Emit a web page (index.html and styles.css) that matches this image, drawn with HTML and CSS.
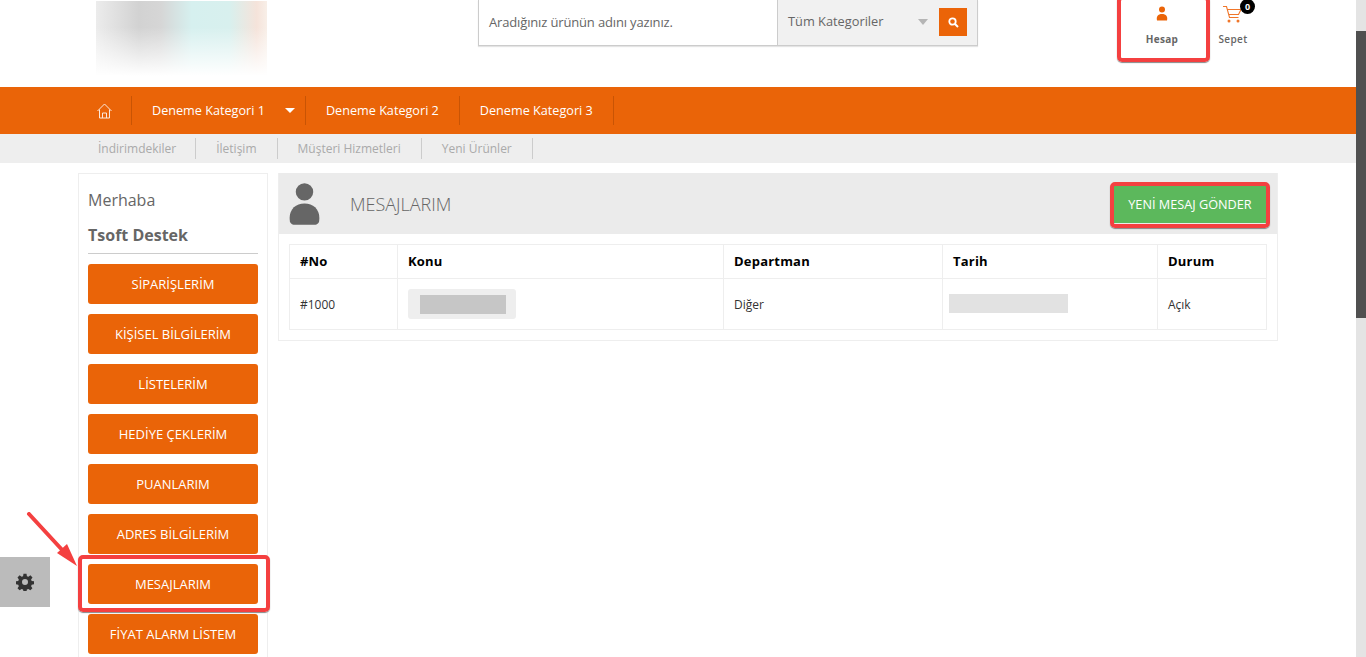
FILE: index.html
```html
<!DOCTYPE html>
<html lang="tr">
<head>
    <meta charset="UTF-8">
    <title>Mesajlarım</title>
    <link rel="stylesheet" href="styles.css">
</head>
<body>
    <header class="top">
        <div class="logo"></div>
        <div class="search">
            <div class="search-input">Aradığınız ürünün adını yazınız.</div>
            <div class="search-cat">
                <span class="cat-label">Tüm Kategoriler</span>
                <span class="cat-arrow"></span>
                <span class="search-btn">
                    <svg width="11" height="11" viewBox="0 0 11 11"><circle cx="4.5" cy="4.5" r="3.2" fill="none" stroke="#fff" stroke-width="1.8"/><path d="M7 7l3 3" stroke="#fff" stroke-width="2"/></svg>
                </span>
            </div>
        </div>
        <div class="account">
            <svg width="12" height="15" viewBox="0 0 12 15"><circle cx="6" cy="3.5" r="3" fill="#eb6408"/><path d="M1 14.5c-1-4 1-6.500 5-6.500s6 2.500 5 6.500z" fill="#eb6408"/></svg>
            <span>Hesap</span>
        </div>
        <div class="cart">
            <svg width="20" height="17" viewBox="0 0 20 17"><path d="M0 .5h3.500l3 11h9M4.500 3.500H18l-2.500 5H6" fill="none" stroke="#f0762a" stroke-width="1.100"/><circle cx="6" cy="15" r="1.500" fill="#f0762a"/><circle cx="15" cy="15" r="1.500" fill="#f0762a"/></svg>
            <span class="cart-badge">0</span>
            <span class="cart-label">Sepet</span>
        </div>
    </header>

    <nav class="mainnav">
        <a class="nav-home">
            <svg width="15" height="16" viewBox="0 0 15 16" fill="none" stroke="#fff" stroke-width="1" opacity="0.85"><path d="M.5 8l7-7 7 7M2.500 6.500V15h10V6.500M5.500 15v-5h4v5"/></svg>
        </a>
        <a class="nav-item nav-drop">Deneme Kategori 1<span class="nav-caret"></span></a>
        <a class="nav-item">Deneme Kategori 2</a>
        <a class="nav-item">Deneme Kategori 3</a>
    </nav>

    <nav class="subnav">
        <a>İndirimdekiler</a>
        <a>İletişim</a>
        <a>Müşteri Hizmetleri</a>
        <a>Yeni Ürünler</a>
    </nav>

    <main class="page">
        <aside class="side">
            <div class="hello">Merhaba</div>
            <div class="username">Tsoft Destek</div>
            <a class="side-btn">SİPARİŞLERİM</a>
            <a class="side-btn">KİŞİSEL BİLGİLERİM</a>
            <a class="side-btn">LİSTELERİM</a>
            <a class="side-btn">HEDİYE ÇEKLERİM</a>
            <a class="side-btn">PUANLARIM</a>
            <a class="side-btn">ADRES BİLGİLERİM</a>
            <a class="side-btn">MESAJLARIM</a>
            <a class="side-btn">FİYAT ALARM LİSTEM</a>
        </aside>

        <section class="panel">
            <div class="panel-head">
                <svg class="panel-icon" width="31" height="42" viewBox="0 0 32 43"><circle cx="16" cy="9" r="9" fill="#666"/><path d="M1 40c-2-12 5-19 15-19s17 7 15 19c-1 2-3 3-5 3H6c-2 0-4-1-5-3z" fill="#666"/></svg>
                <h2>MESAJLARIM</h2>
                <a class="new-msg">YENİ MESAJ GÖNDER</a>
            </div>
            <table class="msg-table">
                <thead>
                    <tr>
                        <th class="col-no">#No</th>
                        <th class="col-subject">Konu</th>
                        <th class="col-dept">Departman</th>
                        <th class="col-date">Tarih</th>
                        <th>Durum</th>
                    </tr>
                </thead>
                <tbody>
                    <tr>
                        <td>#1000</td>
                        <td><span class="blur-subject"><span></span></span></td>
                        <td>Diğer</td>
                        <td><span class="blur-date"></span></td>
                        <td>Açık</td>
                    </tr>
                </tbody>
            </table>
        </section>
    </main>

    <!-- floating stuff and the red annotations drawn on the screenshot -->
    <div class="settings">
        <svg width="18" height="18" viewBox="0 0 24 24"><path fill="#333" fill-rule="evenodd" d="M10 1h4l.6 3.200 1.900.8 2.700-1.900 2.800 2.800-1.900 2.700.8 1.900 3.100.5v4l-3.100.6-.8 1.900 1.800 2.700-2.800 2.800-2.700-1.800-1.900.8-.5 3H10l-.6-3-1.900-.8-2.700 1.800-2.800-2.800 1.800-2.700-.8-1.900-3-.6v-4l3-.5.8-1.900-1.800-2.700 2.800-2.800 2.700 1.900 1.900-.8zM12 8a4 4 0 1 0 0 8 4 4 0 0 0 0-8z"/></svg>
    </div>
    <div class="mark mark-account"></div>
    <div class="mark mark-newmsg"></div>
    <div class="mark mark-side"></div>
    <svg class="mark-arrow" width="56" height="60" viewBox="0 0 56 60"><path d="M3 2l36 39" stroke="#f44040" stroke-width="4" stroke-linecap="round"/><path d="M51 54L31 41l10-9z" fill="#f44040"/></svg>
    <div class="scroll"><div class="scroll-thumb"></div></div>
</body>
</html>
```
FILE: styles.css
```css
html, body {
    margin: 0;
    height: 657px;
    overflow: hidden;
}
body {
    font-family: "Open Sans", Arial, sans-serif;
    font-size: 12px;
    color: #333;
    background-color: #fff;
}
a {
    text-decoration: none;
}

/* top header */
.top {
    display: flex;
    height: 87px;
    padding-left: 96px;
}
.logo {
    width: 171px;
    height: 75px;
    margin-top: 1px;
    background:
        linear-gradient(to bottom, rgba(255,255,255,0) 35%, #fff 100%),
        linear-gradient(to right, #ececec 0%, #d2d2d2 25%, #d6d6d6 38%, #d6f0ef 56%, #d8f0ee 78%, #f5e3da 94%, #f8efe8 100%);
}
.search {
    display: flex;
    width: 500px;
    height: 46px;
    margin-left: 211px;
    box-sizing: border-box;
    border: 1px solid #ccc;
    border-top: none;
    box-shadow: 0 1px 1px #e4e4e4;
}
.search-input {
    width: 299px;
    box-sizing: border-box;
    padding: 13px 10px;
    font-size: 13px;
    letter-spacing: -0.15px;
    line-height: 18px;
    color: #666;
    border-right: 1px solid #ccc;
}
.search-cat {
    flex: 1;
    display: flex;
    align-items: flex-start;
    background-color: #f1f1f1;
    padding: 8px 10px;
}
.cat-label {
    flex: 1;
    font-size: 12.8px;
    line-height: 28px;
    color: #666;
    margin-top: -1px;
}
.cat-arrow {
    width: 0;
    height: 0;
    margin: 11px 11px 0 0;
    border-left: 5px solid transparent;
    border-right: 5px solid transparent;
    border-top: 6px solid #b5b5b5;
}
.search-btn {
    display: flex;
    align-items: center;
    justify-content: center;
    width: 28px;
    height: 28px;
    background-color: #eb6408;
}
.account, .cart {
    display: flex;
    flex-direction: column;
    align-items: center;
    font-size: 10px;
    font-weight: 700;
    color: #666;
}
.account {
    width: 90px;
    margin-left: 139px;
    padding-top: 6px;
    letter-spacing: 0.3px;
}
.account span {
    margin-top: 11px;
}
.cart {
    position: relative;
    width: 40px;
    margin-left: 6px;
    padding-top: 6px;
}
.cart-label {
    margin-top: 9px;
    font-weight: 600;
    letter-spacing: 0.4px;
}
.cart-badge {
    position: absolute;
    top: -1px;
    left: 27px;
    width: 15px;
    height: 15px;
    border-radius: 50%;
    background-color: #000;
    color: #fff;
    font-size: 9px;
    line-height: 15px;
    text-align: center;
}

/* orange menu */
.mainnav {
    display: flex;
    height: 47px;
    padding-left: 78px;
    background-color: #ea6408;
}
.mainnav a {
    display: flex;
    align-items: center;
    box-sizing: border-box;
    height: 29px;
    margin-top: 9px;
    padding: 0 20px 2px;
    color: #fff;
    font-size: 12.65px;
    border-right: 1px solid #c95404;
}
.mainnav .nav-home {
    width: 54px;
    padding: 0 0 0 19px;
}
.mainnav .nav-drop {
    padding-right: 10px;
}
.nav-caret {
    width: 0;
    height: 0;
    margin: 2px 0 0 20px;
    border-left: 5px solid transparent;
    border-right: 5px solid transparent;
    border-top: 5px solid #fff;
}

/* grey menu */
.subnav {
    display: flex;
    height: 29px;
    padding-left: 78px;
    background-color: #eee;
}
.subnav a {
    height: 21px;
    margin-top: 4px;
    padding: 0 20px;
    font-size: 12px;
    line-height: 22px;
    color: #aaa;
    border-right: 1px solid #ccc;
}
.subnav a:first-child {
    padding-right: 19px;
}

/* page body */
.page {
    display: flex;
    align-items: flex-start;
    gap: 10px;
    padding: 10px 0 0 78px;
}
.side {
    width: 190px;
    box-sizing: border-box;
    padding: 0 9px;
    border: 1px solid #eee;
    flex-shrink: 0;
}
.hello {
    margin-top: 14px;
    font-size: 16px;
    line-height: 24px;
    color: #666;
}
.username {
    margin-top: 11px;
    padding-bottom: 6px;
    border-bottom: 1px solid #ccc;
    font-size: 16px;
    font-weight: 700;
    line-height: 24px;
    color: #666;
    margin-bottom: 10px;
}
.side-btn {
    display: block;
    height: 40px;
    margin-bottom: 10px;
    background-color: #ea6408;
    border-radius: 3px;
    color: #fff;
    font-size: 13px;
    line-height: 41px;
    text-align: center;
}
.panel {
    width: 1000px;
    height: 168px;
    box-sizing: border-box;
    border: 1px solid #eee;
    border-top: none;
}
.panel-head {
    display: flex;
    align-items: center;
    height: 61px;
    background-color: #ebebeb;
    padding: 0 11px 0 10px;
}
.panel-icon {
    flex-shrink: 0;
    margin-top: 1px;
}
.panel-head h2 {
    flex: 1;
    margin: 0 0 0 30px;
    font-size: 18px;
    font-weight: 300;
    color: #666;
}
.new-msg {
    width: 152px;
    height: 38px;
    margin-top: 1px;
    background-color: #5cb85c;
    color: #fff;
    font-size: 12.7px;
    line-height: 39px;
    text-align: center;
}
.msg-table {
    width: 978px;
    margin: 10px 0 0 10px;
    border-collapse: collapse;
    table-layout: fixed;
    font-size: 12px;
}
.msg-table th, .msg-table td {
    padding: 0 10px;
    text-align: left;
    border: 1px solid #eee;
}
.msg-table th {
    height: 31px;
    padding-bottom: 2px;
    font-size: 13px;
    letter-spacing: 0.2px;
    color: #000;
}
.msg-table td {
    height: 50px;
    color: #333;
}
.col-no { width: 87px; }
.col-subject { width: 305px; }
.col-dept { width: 198px; }
.col-date { width: 194px; }
.blur-subject {
    display: block;
    width: 108px;
    height: 30px;
    box-sizing: border-box;
    padding: 6px 10px 6px 12px;
    background-color: #eee;
    border-radius: 3px;
}
.blur-subject span {
    display: block;
    height: 19px;
    background-color: #c6c6c6;
}
.blur-date {
    display: block;
    width: 119px;
    height: 19px;
    margin: -2px 0 0 -4px;
    background-color: #e2e2e2;
}

/* things that lie over the page */
.settings {
    position: absolute;
    left: 0;
    top: 557px;
    width: 50px;
    height: 50px;
    display: flex;
    align-items: center;
    justify-content: center;
    background-color: #bbb;
}
.mark {
    position: absolute;
    box-sizing: border-box;
    border: 4px solid #f44040;
    border-radius: 5px;
    box-shadow: 0 1px 1px #888;
}
.mark-account {
    left: 1117px;
    top: -4px;
    width: 93px;
    height: 66px;
}
.mark-newmsg {
    left: 1110px;
    top: 182px;
    width: 160px;
    height: 46px;
}
.mark-side {
    left: 78px;
    top: 555px;
    width: 192px;
    height: 57px;
}
.mark-arrow {
    position: absolute;
    left: 26px;
    top: 512px;
}
.scroll {
    position: fixed;
    right: 0;
    top: 0;
    width: 10px;
    height: 657px;
    background-color: #e4e4e4;
}
.scroll-thumb {
    height: 287px;
    margin-top: 31px;
    background-color: #505050;
}
```
